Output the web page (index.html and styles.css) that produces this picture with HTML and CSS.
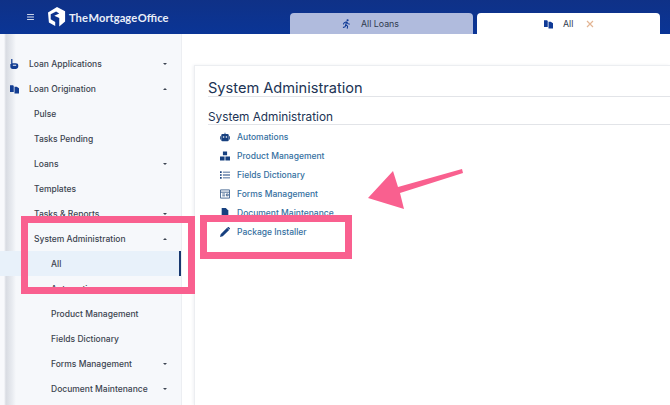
FILE: index.html
```html
<!DOCTYPE html>
<html lang="en">
<head>
<meta charset="utf-8">
<title>System Administration</title>
<link rel="stylesheet" href="styles.css">
</head>
<body>
<div class="app">
  <header class="topbar">
    <div class="brand">
      <svg class="burger" viewBox="0 0 8 7"><path d="M0 .5h8M0 3.500h8M0 6.500h8"/></svg>
      <svg class="logo" viewBox="0 0 20 22"><path d="M10 0l9 4.500V16l-6.500 5.500V12L7 9.500 12.500 7 9 5 3 8v5.500l5 3V21l-7-4L0 6z"/></svg>
      <span class="brand-name">The Mortgage Office</span>
    </div>
    <nav class="tabs">
      <div class="tab tab-muted">
        <svg class="tab-icon" viewBox="0 0 12 14"><circle cx="7.500" cy="1.800" r="1.500"/><path d="M6 4L3 5 1.500 7.500M6 4l2 2.500 2.500 1M6 4L5 8l2.500 2L7 13.500M5 8l-1 3-3 1" fill="none" stroke="currentColor" stroke-width="1.500"/></svg>
        <span>All Loans</span>
      </div>
      <div class="tab tab-active">
        <svg class="tab-icon" viewBox="0 0 12 12"><path d="M0 1h4l1 1v8H0zM6 3h3l3 2v7H6z"/></svg>
        <span>All</span>
        <svg class="tab-close" viewBox="0 0 8 8"><path d="M1 1l6 6M7 1L1 7"/></svg>
      </div>
    </nav>
  </header>
  <div class="workspace">
    <aside class="sidebar">
      <ul class="menu">
        <li class="item level-1"><svg class="side-icon" viewBox="0 0 10 12"><path d="M1 0h1.500v5h4c2 0 3 1 3 2.500V9c0 2-1.500 3-3 3H3c-2 0-3-1-3-3V6h3v2h4V7H1z"/></svg><span>Loan Applications</span><i class="caret"></i></li>
        <li class="item level-1"><svg class="side-icon" viewBox="0 0 12 12"><path d="M0 1h4l1 1v8H0zM6 3h3l3 2v7H6z"/></svg><span>Loan Origination</span><i class="caret up"></i></li>
        <li class="item level-2"><span>Pulse</span></li>
        <li class="item level-2"><span>Tasks Pending</span></li>
        <li class="item level-2"><span>Loans</span><i class="caret"></i></li>
        <li class="item level-2"><span>Templates</span></li>
        <li class="item level-2"><span>Tasks &amp; Reports</span><i class="caret"></i></li>
        <li class="item level-2"><span>System Administration</span><i class="caret up"></i></li>
        <li class="item level-3 active"><span>All</span></li>
        <li class="item level-3"><span>Automations</span></li>
        <li class="item level-3"><span>Product Management</span></li>
        <li class="item level-3"><span>Fields Dictionary</span></li>
        <li class="item level-3"><span>Forms Management</span><i class="caret"></i></li>
        <li class="item level-3"><span>Document Maintenance</span><i class="caret"></i></li>
      </ul>
    </aside>
    <main class="content">
      <section class="card">
        <h1 class="card-title">System Administration</h1>
        <h2 class="card-subtitle">System Administration</h2>
        <ul class="links">
          <li class="link"><svg class="link-icon" viewBox="0 0 12 10"><path d="M5.500 0h1v1.500H9a1.500 1.500 0 0 1 1.500 1.500v5.500A1.500 1.500 0 0 1 9 10H3a1.500 1.500 0 0 1-1.500-1.500V3A1.500 1.500 0 0 1 3 1.500h2.500zM0 4h1v4H0zM11 4h1v4h-1z"/><circle class="eye" cx="4.300" cy="5" r="1"/><circle class="eye" cx="7.700" cy="5" r="1"/></svg><span>Automations</span></li>
          <li class="link"><svg class="link-icon" viewBox="0 0 12 11"><path d="M3.500 0h5v4.500h-5zM0 6h5.500v5H0zM6.500 6H12v5H6.500z"/></svg><span>Product Management</span></li>
          <li class="link"><svg class="link-icon" viewBox="0 0 12 10"><path d="M0 .5h2v2H0zM3.500 1h8.500v1H3.500zM0 4h2v2H0zM3.500 4.500h8.500v1H3.500zM0 7.500h2v2H0zM3.500 8h8.500v1H3.500z"/></svg><span>Fields Dictionary</span></li>
          <li class="link"><svg class="link-icon link-outline" viewBox="0 0 11 10"><path d="M.5.500h10v9H.500zM.5 3h10M2.500 5h3M2.500 7h3M7 5h2v2H7z"/></svg><span>Forms Management</span></li>
          <li class="link"><svg class="link-icon" viewBox="0 0 10 12"><path d="M1 0h5l3 3v9H1z"/></svg><span>Document Maintenance</span></li>
          <li class="link"><svg class="link-icon" viewBox="0 0 12 12"><path d="M0 12l.8-3.200L8.500 1l2.500 2.500-7.700 7.700zM9.300.3a1 1 0 0 1 1.400 0l1 1a1 1 0 0 1 0 1.400l-.4.400L8.800.8z"/></svg><span>Package Installer</span></li>
        </ul>
      </section>
    </main>
  </div>
  <div class="callout callout-menu"></div>
  <div class="callout callout-link"></div>
  <svg class="arrow" viewBox="0 0 97 41"><polygon points="1,29 26,2 31,18 95,0 96,4 33,24 37,40"/></svg>
</div>
</body>
</html>
```

FILE: styles.css
```css
* { box-sizing: border-box; }
html, body { margin: 0; height: 100%; overflow: hidden; background: #fff; }
body { font-family: "Inter", "Liberation Sans", sans-serif; font-size: 9px; color: #3b4350; }
ul { list-style: none; margin: 0; padding: 0; }

.app { position: relative; display: flex; flex-direction: column; width: 670px; height: 405px; overflow: hidden; }

.topbar { flex: 0 0 34px; display: flex; justify-content: space-between; align-items: flex-end; background: linear-gradient(#0f3187, #0a3596); padding-right: 10px; }
.brand { display: flex; align-items: center; height: 34px; padding-left: 27px; }
.burger { width: 7px; height: 6px; margin-right: 14px; fill: none; stroke: #e8ecf6; stroke-width: 1.100; }
.logo { width: 18px; height: 20px; margin-right: 3px; fill: #fff; }
.brand-name { color: #e9eef8; font-family: "Lato", sans-serif; font-weight: 700; font-size: 11.200px; word-spacing: -2px; white-space: nowrap; }
.tabs { display: flex; gap: 4px; }
.tab { width: 183px; height: 21px; border-radius: 4px 4px 0 0; display: flex; align-items: center; font-weight: 400; font-size: 8.800px; color: #2f3a4e; }
.tab-muted { background: #b0bbdd; padding-left: 52px; }
.tab-active { background: #fff; padding-left: 67px; }
.tab-icon { width: 9px; height: 10px; margin-right: 10px; fill: #0f3a96; color: #0f3a96; }
.tab-close { width: 8px; height: 8px; margin-left: 13px; fill: none; stroke: #e3b594; stroke-width: 1.200; }

.workspace { flex: 1; display: flex; min-height: 0; }
.sidebar { flex: 0 0 182px; position: relative; padding-top: 17px; background: linear-gradient(90deg, #f8f9fc 0 4px, #d8dbe2 6px, #e8ebf0 12px, #f6f8fb 16px); overflow: hidden; border-right: 1px solid #eceef2; }
.item { position: relative; height: 25px; display: flex; align-items: center; font-weight: 500; font-size: 8.500px; color: #3c4450; white-space: nowrap; }
.level-1 { padding-left: 29px; }
.level-2 { padding-left: 34px; }
.level-3 { padding-left: 51px; }
.side-icon { position: absolute; left: 10px; top: 8px; width: 9px; height: 10px; fill: #123d92; }
.caret { position: absolute; left: 163px; top: 12px; border-left: 2.500px solid transparent; border-right: 2.500px solid transparent; border-top: 2.500px solid #3b4350; }
.caret.up { border-top: 0; border-bottom: 2.500px solid #3b4350; }
.active { background: #e8f1fa; border-right: 2px solid #17386f; }

.content { flex: 1; padding: 31px 0 0 12px; min-width: 0; }
.card { height: 340px; background: #fff; border-top: 1px solid #eceef1; border-left: 1px solid #eceef1; box-shadow: -1px 0 3px #f0f1f4; padding: 13px 0 0 13px; }
.card-title { margin: 0; font-size: 14.600px; font-weight: 400; line-height: 18px; color: #203354; border-bottom: 1px solid #e2e4e8; height: 18px; }
.card-subtitle { margin: 13px 0 0; font-size: 11.800px; font-weight: 400; line-height: 15px; height: 15px; color: #203354; border-bottom: 1px solid #e2e4e8; }
.links { padding: 2px 0 0 12px; }
.link { height: 19px; display: flex; align-items: center; color: #35709f; font-size: 8.500px; font-weight: 500; }
.link-icon { width: 10px; height: 10px; margin-right: 7px; fill: #17407f; flex: none; }
.link-outline { fill: none; stroke: #3d5f8c; stroke-width: 1; }
.eye { fill: #fff; }

.callout { position: absolute; border: 7px solid #f9608f; }
.callout-menu { left: 21px; top: 216px; width: 174px; height: 78px; }
.callout-link { left: 200px; top: 215px; width: 152px; height: 44px; }
.arrow { position: absolute; left: 367px; top: 169px; width: 97px; height: 41px; fill: #f9608f; }
```
